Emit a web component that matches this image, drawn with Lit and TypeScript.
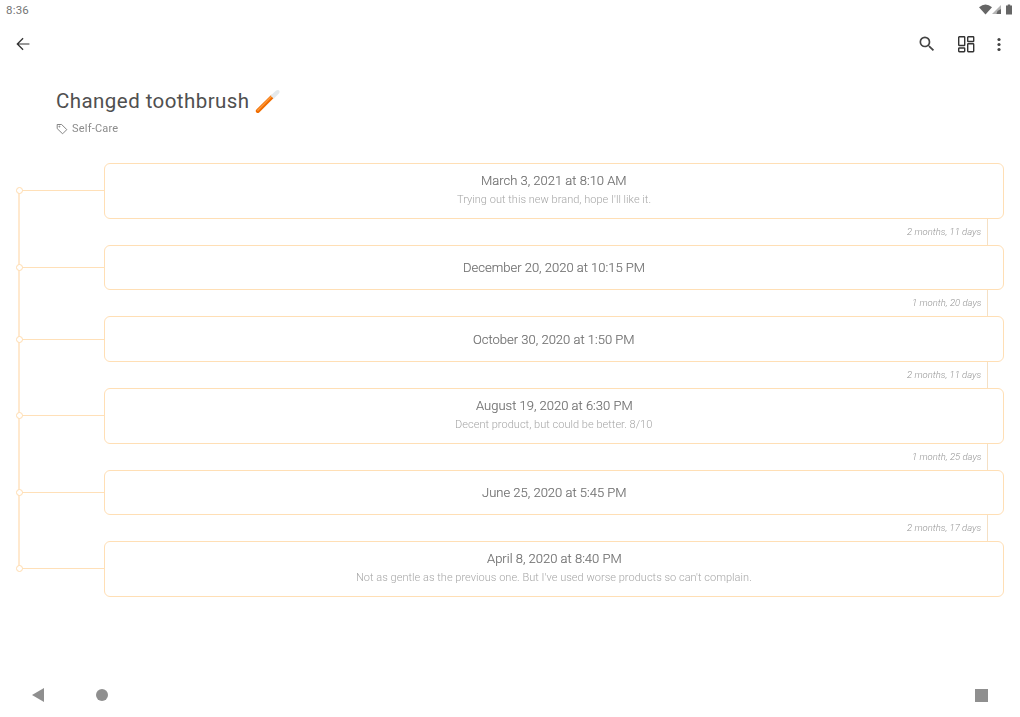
import { LitElement, html, css, svg } from "lit";
import { customElement } from "lit/decorators.js";

const entries = [
  { date: "March 3, 2021 at 8:10 AM", note: "Trying out this new brand, hope I'll like it.", gap: "2 months, 11 days" },
  { date: "December 20, 2020 at 10:15 PM", note: "", gap: "1 month, 20 days" },
  { date: "October 30, 2020 at 1:50 PM", note: "", gap: "2 months, 11 days" },
  { date: "August 19, 2020 at 6:30 PM", note: "Decent product, but could be better. 8/10", gap: "1 month, 25 days" },
  { date: "June 25, 2020 at 5:45 PM", note: "", gap: "2 months, 17 days" },
  { date: "April 8, 2020 at 8:40 PM", note: "Not as gentle as the previous one. But I've used worse products so can't complain.", gap: "" },
];

@customElement("app-root")
export class AppRoot extends LitElement {
  static styles = css`
    :host { display: flex; flex-direction: column; width: 1020px; height: 717px; background: #fff; font-family: Roboto, sans-serif; overflow: hidden; position: relative; }
    svg { display: block; }
    .status { height: 19px; padding: 0 7px 0 6px; display: flex; align-items: center; justify-content: space-between; font-size: 11.5px; color: #757575; letter-spacing: .2px; }
    .sys { display: flex; align-items: center; }
    .sys .batt { margin-left: 4px; }
    .toolbar { height: 50px; display: flex; align-items: center; justify-content: space-between; padding: 0 9px 0 11.5px; }
    .right { display: flex; align-items: center; gap: 9px; }
    .right .search { margin-right: 8px; }
    .head { padding: 19px 0 0 56px; height: 75px; box-sizing: border-box; }
    .title { display: flex; align-items: center; gap: 5px; font-size: 20.5px; line-height: 24px; color: #505050; letter-spacing: .44px; }
    .tag { display: flex; align-items: center; gap: 4px; margin-top: 8px; font-size: 11px; line-height: 14px; color: #8c8c8c; letter-spacing: .2px; }
    .tag span { will-change: transform; }
    .list { display: flex; flex-direction: column; padding: 19px 16px 0 0; }
    .row { display: flex; }
    .gutter { width: 104px; flex: none; position: relative; }
    .h { position: absolute; left: 19px; right: 0; top: 50%; height: 1px; margin-top: -.5px; background: #ffe0b8; }
    .dot { position: absolute; left: 16px; top: 50%; width: 5px; height: 5px; margin-top: -3.5px; border: 1px solid #ffdcae; border-radius: 50%; background: #fff; }
    .v { position: absolute; left: 18px; width: 2px; background: #ffe9cf; }
    .v.down { top: 50%; bottom: 0; }
    .v.up { top: 0; bottom: 50%; }
    .card { flex: 1; box-sizing: border-box; height: 45.5px; border: 1px solid #ffdfb5; border-radius: 6px; display: flex; flex-direction: column; align-items: center; justify-content: center; background: #fff; }
    .card.tall { height: 55.75px; padding-bottom: 2px; }
    .date { font-size: 13px; line-height: 17px; color: #707070; font-weight: 300; -webkit-text-stroke: .15px #707070; will-change: transform; }
    .note { font-size: 11px; line-height: 14px; margin-top: 4px; color: #a6a6a6; font-weight: 300; letter-spacing: .03px; will-change: transform; }
    .between { height: 26px; display: flex; }
    .between .gutter .v { top: 0; bottom: 0; }
    .between .info { flex: 1; display: flex; justify-content: flex-end; padding-right: 16px; }
    .between span { font-size: 9.5px; line-height: 26px; font-style: italic; font-weight: 300; color: #959595; padding-right: 6px; will-change: transform; }
    .between i { display: block; width: 1px; background: #f5e0c4; }
    .nav { position: absolute; left: 0; right: 0; bottom: 0; height: 44px; display: flex; align-items: center; padding: 0 32px; box-sizing: border-box; }
    .spacer { flex: 1; }
    .home { width: 12px; height: 12px; border-radius: 50%; background: #8f8f8f; margin-left: 52px; }
    .recent { width: 13px; height: 13px; background: #8f8f8f; }
  `;

  private brush() {
    return svg`<svg width="26" height="26" viewBox="0 0 26 26">
      <path d="M2.8 23 L17 8.8" stroke="#ef6c00" stroke-width="4" stroke-linecap="round"/>
      <path d="M2.8 22.2 L16.4 8.6" stroke="#ff9838" stroke-width="1.4" stroke-linecap="round"/>
      <path d="M15.6 7.8 L20.8 2.8 Q23 1.2 24.2 2.4 Q25.4 3.8 23.8 5.6 L18.8 10.8 Z" fill="#e4e9ec"/>
    </svg>`;
  }

  render() {
    return html`
      <div class="status">
        <span>8:36</span>
        <div class="sys">
          <svg width="13" height="11" viewBox="0 0 13 11"><path d="M0 3.2 Q6.5 -2 13 3.2 L6.5 10.5 Z" fill="#666"/></svg>
          <svg width="10" height="11" viewBox="0 0 10 11"><path d="M9 1 V10 H0 Z" fill="#b5b5b5"/><path d="M9 5 V10 H4.5 L5.5 7 Z" fill="#666"/></svg>
          <svg class="batt" width="7" height="11" viewBox="0 0 7 11"><path d="M1.8 0.5 H4.2 V1.5 H6 V10.5 H0 V1.5 H1.8 Z" fill="#666"/></svg>
        </div>
      </div>
      <div class="toolbar">
        <svg width="22" height="22" viewBox="0 0 24 24"><path d="M19 11.4 H7.4 L12.6 6.2 L11.6 5.2 L4.8 12 L11.6 18.8 L12.6 17.8 L7.4 12.6 H19 Z" fill="#333"/></svg>
        <div class="right">
          <svg class="search" width="20" height="20" viewBox="0 0 24 24"><path d="M15.5 14h-.79l-.28-.27A6.47 6.47 0 0 0 16 9.5 6.5 6.5 0 1 0 9.5 16c1.61 0 3.09-.59 4.23-1.57l.27.28v.79l5 4.99L20.49 19l-4.99-5zm-6 0C7.01 14 5 11.99 5 9.5S7.01 5 9.5 5 14 7.01 14 9.5 11.99 14 9.5 14z" fill="#444"/></svg>
          <svg width="24" height="24" viewBox="0 0 24 24" fill="none" stroke="#333" stroke-width="1.4"><rect x="4.7" y="4.7" width="6" height="8.8" rx=".6"/><rect x="13.7" y="4.7" width="6" height="4.8" rx=".6"/><rect x="4.7" y="16" width="6" height="3.7" rx=".6"/><rect x="13.7" y="11.8" width="6" height="7.9" rx=".6"/></svg>
          <svg width="24" height="24" viewBox="0 0 24 24"><circle cx="12" cy="7.5" r="1.6" fill="#444"/><circle cx="12" cy="12.5" r="1.6" fill="#444"/><circle cx="12" cy="17.5" r="1.6" fill="#444"/></svg>
        </div>
      </div>
      <div class="head">
        <div class="title"><span>Changed toothbrush</span>${this.brush()}</div>
        <div class="tag">
          <svg width="12" height="12" viewBox="0 0 12 12" fill="none" stroke="#777" stroke-width=".9"><path d="M1.2 1.5 H5.6 L10.8 6.6 L6.6 10.8 L1.2 5.6 Z" stroke-linejoin="round"/><circle cx="3.4" cy="3.6" r=".5"/></svg>
          <span>Self-Care</span>
        </div>
      </div>
      <div class="list">
        ${entries.map((e, i) => html`
          <div class="row">
            <div class="gutter">
              ${i > 0 ? html`<div class="v up"></div>` : ""}
              ${i < entries.length - 1 ? html`<div class="v down"></div>` : ""}
              <div class="h"></div>
              <div class="dot"></div>
            </div>
            <div class="card ${e.note ? "tall" : ""}">
              <div class="date">${e.date}</div>
              ${e.note ? html`<div class="note">${e.note}</div>` : ""}
            </div>
          </div>
          ${e.gap ? html`<div class="between">
            <div class="gutter"><div class="v"></div></div>
            <div class="info"><span>${e.gap}</span><i></i></div>
          </div>` : ""}
        `)}
      </div>
      <div class="nav">
        <svg width="12" height="14" viewBox="0 0 12 14"><path d="M12 0 V14 L0 7 Z" fill="#8f8f8f"/></svg>
        <div class="home"></div>
        <div class="spacer"></div>
        <div class="recent"></div>
      </div>
    `;
  }
}
